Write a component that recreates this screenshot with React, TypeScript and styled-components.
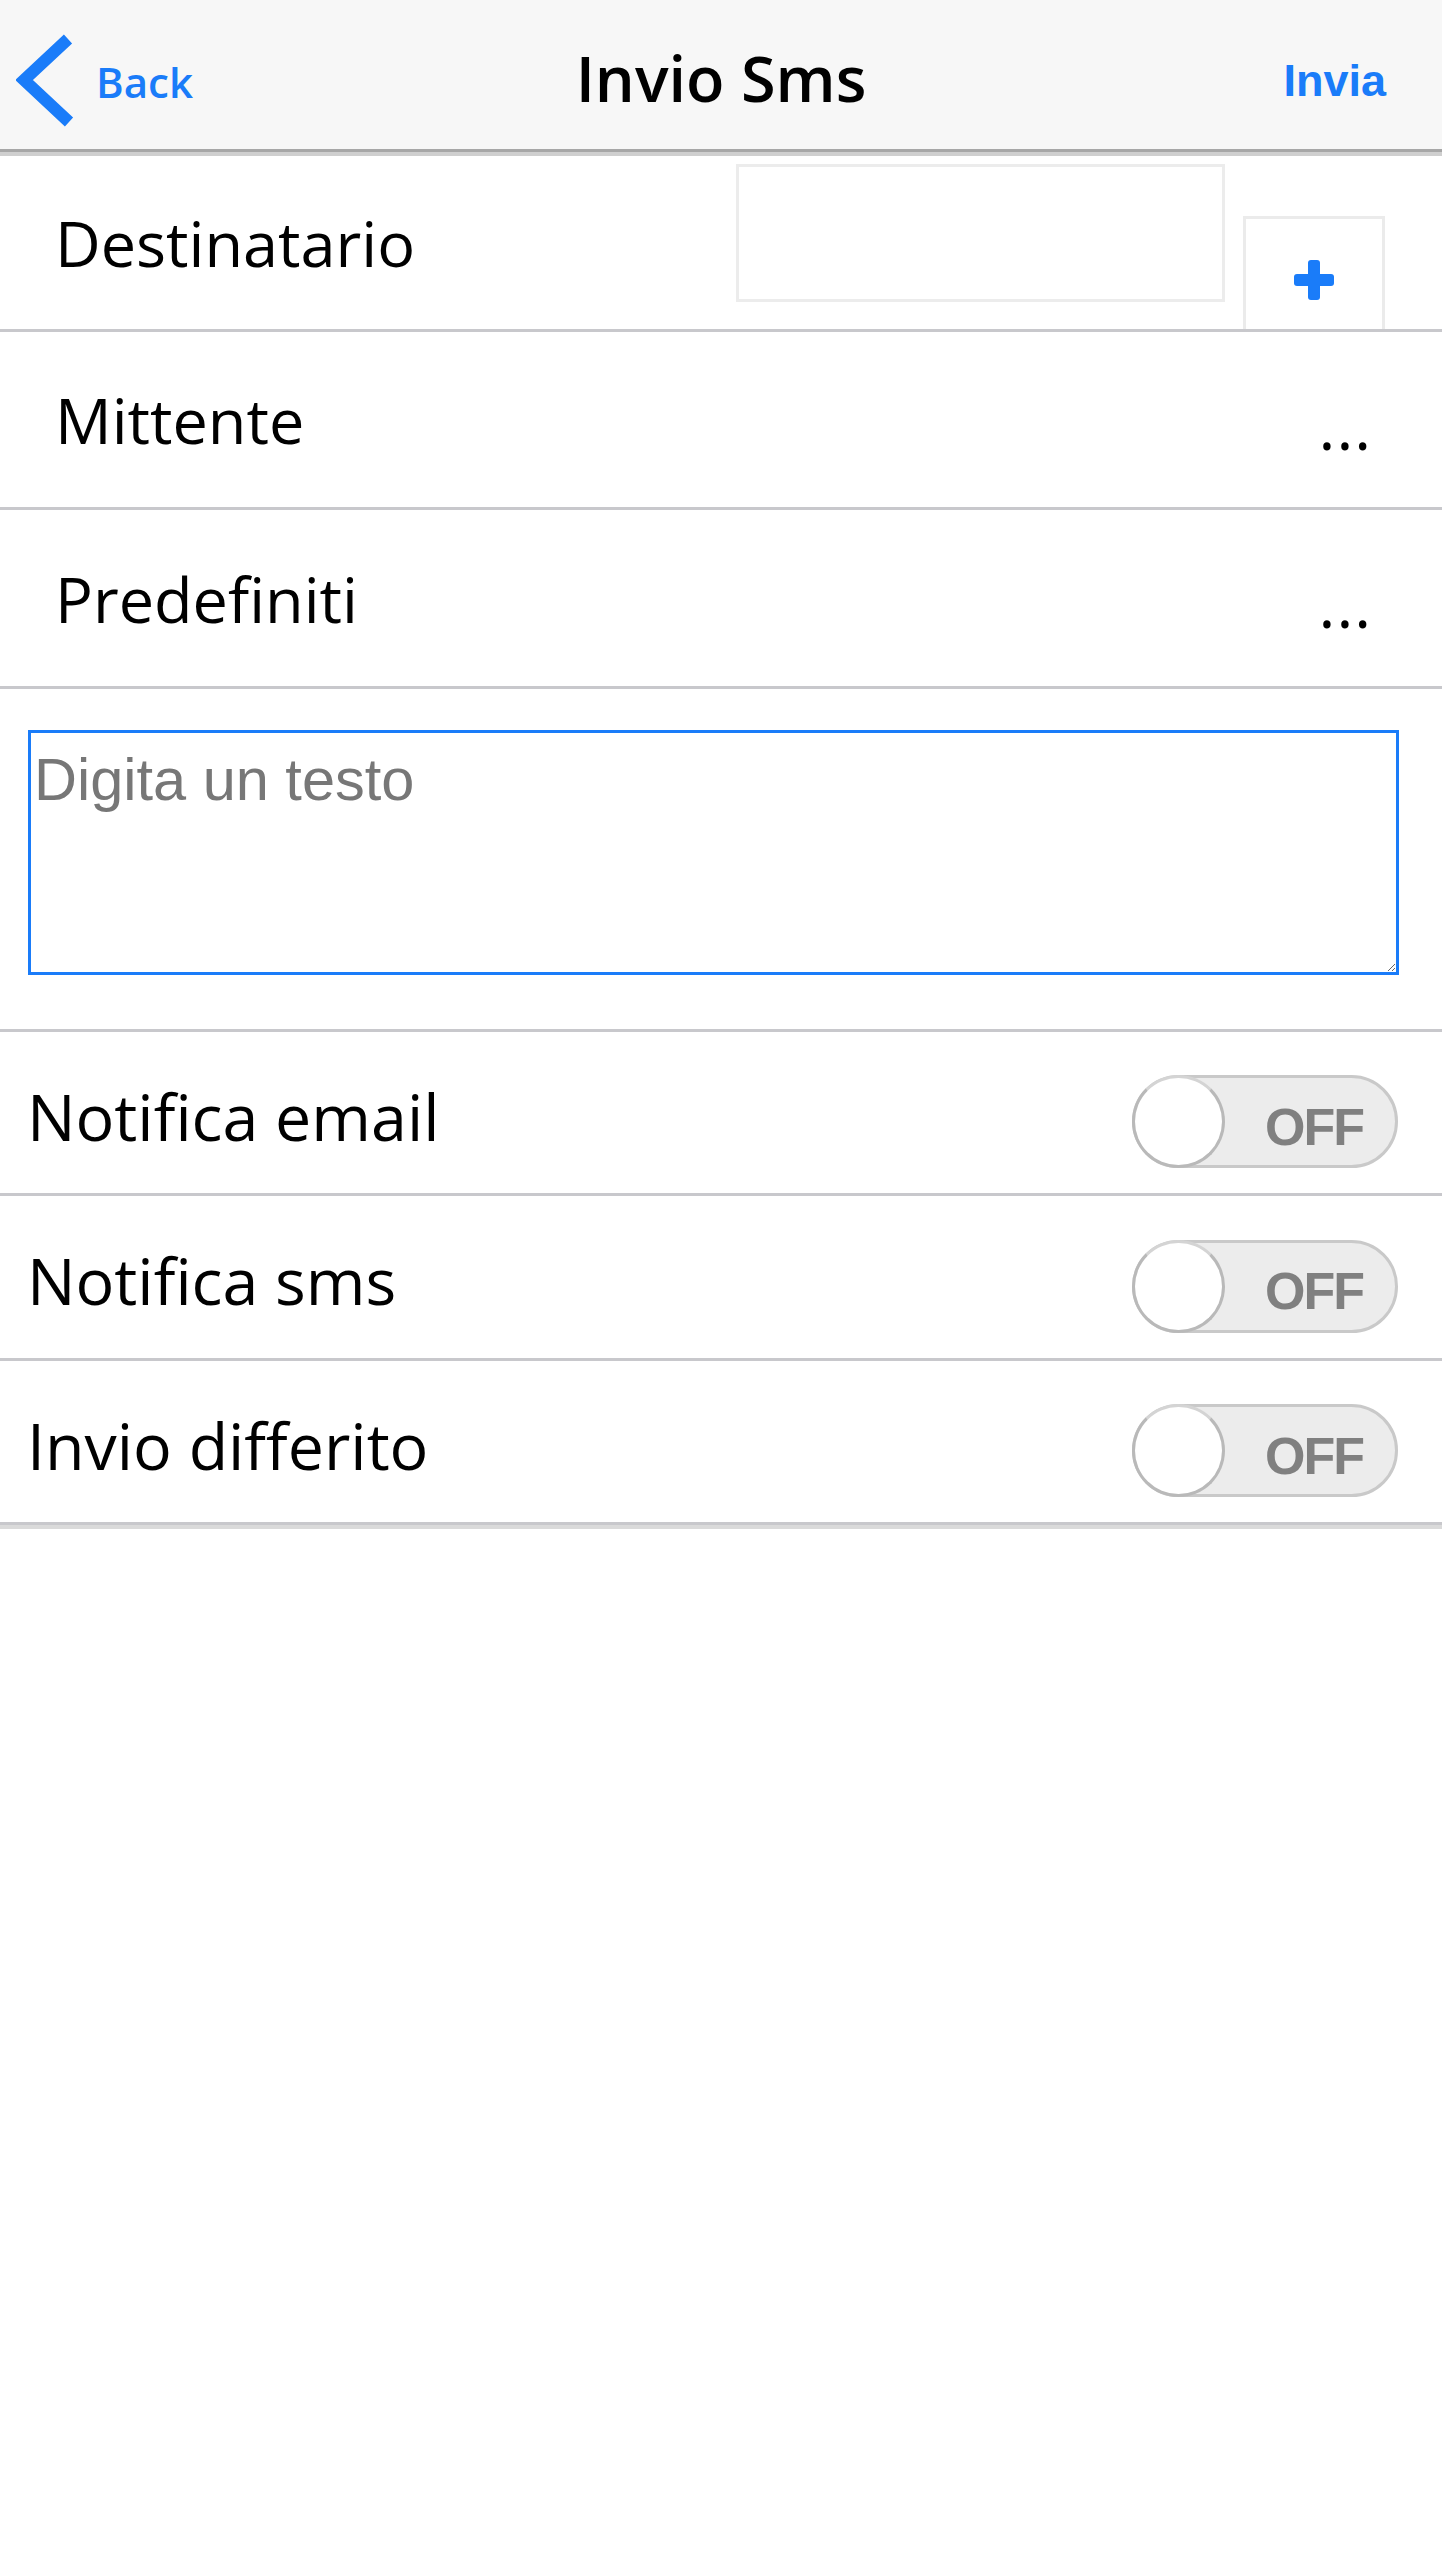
import React from 'react';
import styled, { createGlobalStyle } from 'styled-components';

const BLUE = '#1a7cf9';
const LINE = '#c8c8cc';

const GlobalStyle = createGlobalStyle`
    html, body {
        margin: 0;
        padding: 0;
        background: #ffffff;
    }
    body {
        font-family: "Open Sans", "Noto Sans", sans-serif;
        color: #000000;
    }
    * {
        box-sizing: border-box;
    }
`;

interface ToggleRowData {
    label: string;
    height: number;
}

const toggleRows: ToggleRowData[] = [
    { label: 'Notifica email', height: 164 },
    { label: 'Notifica sms', height: 165 },
    { label: 'Invio differito', height: 164 },
];

const ChevronLeft = () => (
    <svg width="70" height="100" viewBox="0 0 70 100">
        <polyline points="52,9 8,50 53,92" fill="none" stroke={BLUE} strokeWidth="12" />
    </svg>
);

const PlusIcon = () => (
    <svg width="40" height="40" viewBox="0 0 40 40">
        <rect x="14" y="0" width="12" height="40" rx="3" fill={BLUE} />
        <rect x="0" y="14" width="40" height="12" rx="3" fill={BLUE} />
    </svg>
);

const Toggle: React.FunctionComponent<{ on?: boolean }> = ({ on = false }) => (
    <Style.Toggle role="switch" aria-checked={on}>
        <Style.Knob />
        <Style.ToggleText>{on ? 'ON' : 'OFF'}</Style.ToggleText>
    </Style.Toggle>
);

const App: React.FunctionComponent = () => {
    return (
        <Style.Page>
            <GlobalStyle />
            <Style.Header>
                <Style.BackButton>
                    <ChevronLeft />
                    <span>Back</span>
                </Style.BackButton>
                <Style.Title>Invio Sms</Style.Title>
                <Style.SendButton>Invia</Style.SendButton>
            </Style.Header>

            <Style.List>
                <Style.FieldRow $height={176}>
                    <Style.Label $size={63}>Destinatario</Style.Label>
                    <Style.RecipientInput type="text" />
                    <Style.AddButton>
                        <PlusIcon />
                    </Style.AddButton>
                </Style.FieldRow>
                <Style.FieldRow $height={178}>
                    <Style.Label $size={63}>Mittente</Style.Label>
                    <Style.More>...</Style.More>
                </Style.FieldRow>
                <Style.FieldRow $height={179}>
                    <Style.Label $size={63}>Predefiniti</Style.Label>
                    <Style.More>...</Style.More>
                </Style.FieldRow>

                <Style.MessageBlock>
                    <Style.Message placeholder="Digita un testo" />
                </Style.MessageBlock>

                <Style.ToggleList>
                    {toggleRows.map((row) => (
                        <Style.ToggleRow key={row.label} $height={row.height}>
                            <Style.Label $size={64.5}>{row.label}</Style.Label>
                            <Toggle />
                        </Style.ToggleRow>
                    ))}
                </Style.ToggleList>
            </Style.List>
        </Style.Page>
    );
};

const Style = {
    Page: styled.div`
        width: 1442px;
        min-height: 2562px;
        background: #ffffff;
    `,
    // top bar
    Header: styled.header`
        height: 152px;
        background: #f7f7f7;
        border-bottom: 3px solid #a7a7a7;
        display: grid;
        grid-template-columns: 1fr auto 1fr;
        align-items: center;
        padding: 6px 56px 0 56px;
    `,
    BackButton: styled.div`
        display: flex;
        align-items: center;
        justify-self: start;
        margin-left: -40px;
        margin-top: 4px;
        color: ${BLUE};
        font-size: 42px;
        font-weight: 600;
        span {
            margin-left: 10px;
            margin-top: 4px;
        }
    `,
    Title: styled.h1`
        margin: 0;
        font-size: 63px;
        font-weight: 600;
        color: #000000;
    `,
    SendButton: styled.div`
        justify-self: end;
        font-family: "Liberation Sans", Arial, sans-serif;
        font-size: 45px;
        font-weight: 700;
        color: ${BLUE};
        margin-top: 6px;
    `,
    List: styled.div`
        border-top: 4px solid #cfcfcf;
    `,
    FieldRow: styled.div<{ $height: number }>`
        display: flex;
        align-items: center;
        height: ${(p) => p.$height}px;
        padding: 0 57px 0 55px;
        border-bottom: 3px solid ${LINE};
    `,
    Label: styled.div<{ $size: number }>`
        flex: 1;
        font-size: ${(p) => p.$size}px;
        font-weight: 400;
        color: #000000;
        white-space: nowrap;
    `,
    RecipientInput: styled.input`
        align-self: flex-start;
        width: 489px;
        height: 138px;
        margin-top: 8px;
        border: 3px solid #ececec;
        background: #ffffff;
        outline: none;
    `,
    AddButton: styled.div`
        align-self: flex-end;
        width: 142px;
        height: 113px;
        margin-left: 18px;
        border: 3px solid #ebebeb;
        border-bottom: none;
        display: flex;
        justify-content: center;
        align-items: flex-start;
        padding-top: 41px;
    `,
    More: styled.div`
        margin-right: 13px;
        font-size: 64px;
        line-height: 1;
        margin-top: 12px;
        letter-spacing: 1px;
    `,
    MessageBlock: styled.div`
        padding: 41px 43px 54px 28px;
        border-bottom: 3px solid ${LINE};
    `,
    Message: styled.textarea`
        display: block;
        width: 100%;
        height: 245px;
        border: 3px solid ${BLUE};
        border-radius: 0;
        outline: none;
        padding: 12px 3px;
        font-family: "Liberation Sans", Arial, sans-serif;
        font-size: 59.5px;
        color: #000000;
        &::placeholder {
            color: #777777;
        }
    `,
    ToggleList: styled.div`
        border-bottom: 4px solid #dadada;
    `,
    ToggleRow: styled.div<{ $height: number }>`
        display: flex;
        align-items: center;
        height: ${(p) => p.$height}px;
        padding: 6px 44px 0 27px;
        border-bottom: 3px solid ${LINE};
    `,
    Toggle: styled.div`
        position: relative;
        width: 266px;
        height: 93px;
        margin-top: 12px;
        border: 3px solid #c9c9c9;
        border-radius: 47px;
        background: #ececec;
        display: flex;
        align-items: center;
        justify-content: flex-end;
        padding: 10px 32px 0 0;
    `,
    Knob: styled.span`
        position: absolute;
        left: -3px;
        top: -3px;
        width: 93px;
        height: 93px;
        border-radius: 50%;
        background: #ffffff;
        border: 3px solid #b9b9b9;
        border-top-color: #d4d4d4;
    `,
    ToggleText: styled.span`
        font-family: "Liberation Sans", Arial, sans-serif;
        font-size: 52px;
        font-weight: 700;
        letter-spacing: -2px;
        color: #808080;
    `,
};

export default App;
